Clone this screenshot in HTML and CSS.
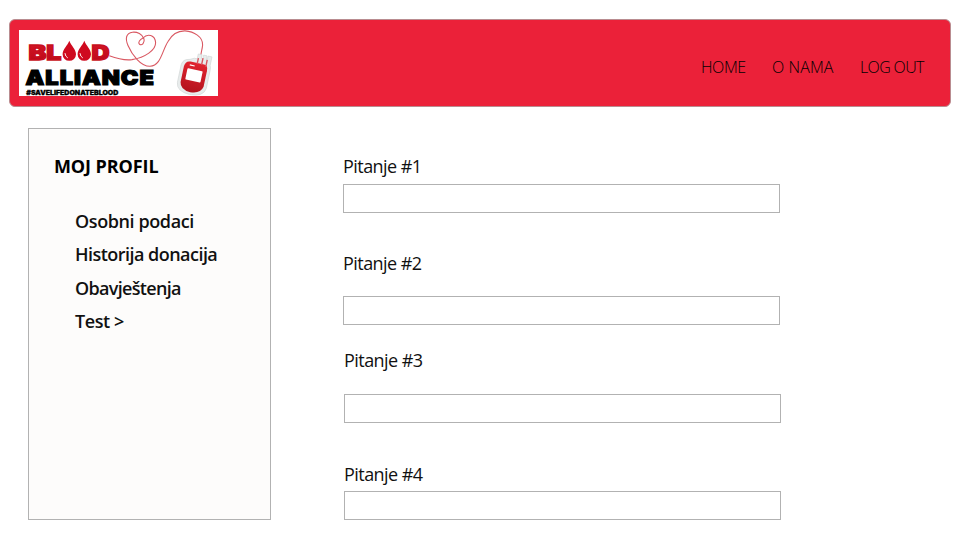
FILE: index.html
```html
<!DOCTYPE html>
<html lang="bs">
<head>
<meta charset="utf-8">
<title>Blood Alliance</title>
<link rel="stylesheet" href="styles.css">
</head>
<body>
<header class="topbar">
  <svg class="logo" viewBox="0 0 199 66" role="img" aria-label="Blood Alliance">
    <defs>
      <linearGradient id="red" x1="0" y1="0" x2="0" y2="1"><stop offset="0" stop-color="#d91828"/><stop offset="1" stop-color="#b80716"/></linearGradient>
      <linearGradient id="bag" x1="0" y1="0" x2="0" y2="1"><stop offset="0" stop-color="#e1242f"/><stop offset="1" stop-color="#b3121d"/></linearGradient>
    </defs>
    <rect width="199" height="66" fill="#fff"/>
    <g class="logo-red">
      <text x="9.500" y="29.5" textLength="33" lengthAdjust="spacingAndGlyphs">BL</text>
      <text x="72.500" y="29.5" textLength="18" lengthAdjust="spacingAndGlyphs">D</text>
    </g>
    <g fill="#cf0a1f">
      <path d="M50.300 10.800C52 15.500 57 19.500 57 24.300A6.700 6.500 0 0 1 43.600 24.300C43.600 19.500 48.600 15.500 50.300 10.800Z"/>
      <path d="M65.300 10.800C67 15.500 72 19.500 72 24.300A6.700 6.500 0 0 1 58.600 24.300C58.600 19.500 63.600 15.500 65.300 10.800Z"/>
    </g>
    <path d="M46 23.500q.2 3 2.500 4.300M61 23.500q.2 3 2.500 4.300" fill="none" stroke="#fff" stroke-width=".9" stroke-linecap="round"/>
    <text class="logo-black" x="6.500" y="54.700" textLength="129.500" lengthAdjust="spacingAndGlyphs">ALLIANCE</text>
    <text class="logo-tag" x="7.300" y="64.500" textLength="92" lengthAdjust="spacingAndGlyphs">#SAVELIFEDONATEBLOOD</text>
    <path d="M90.300 25.700C99 29 106 30.500 113 29.600C126 27.500 137 20 136.600 12.500C136 5 128.500 3 124 8C121 9.500 118.500 12.500 120.500 14.300C123 16 126 12.500 125 9C123.500 4 118 1.700 113.500 2.200C107 3 106 8.500 109 15.500C113 25 122 36.500 131 36.300C142 35.500 142.500 22 149 11.500C154 2.500 161 .8 166 .9C175 1.500 184 7 183.600 15C183.300 20 181.500 22.500 181.500 29" fill="none" stroke="#d95862" stroke-width="1.100"/>
    <g transform="translate(174.700 45.500) rotate(12)">
      <path d="M-7-15L-3-17H0V-22H4V-18H5.500V-22H9V-18H10V-22H14V-13Q15-12 15-8V10Q14 19 0 19.500Q-14 19-14.500 10V-8Q-14-14-7-15Z" fill="#e8ecec" stroke="#d0d5d6" stroke-width=".6"/>
      <path d="M-6-13Q-11-13-11.500-7V9Q-10.500 16.500 0 17Q10.500 16.500 12 9V-7Q12-13 8-13Z" fill="url(#bag)"/>
      <path d="M1-12V-18M5.500-12V-19M10-11V-18" stroke="#d9545d" stroke-width="1.400"/>
      <rect x="-7.500" y="-6" width="15.500" height="11.500" rx=".8" fill="#fff"/>
      <path d="M-6-9.500h5" stroke="#fff" stroke-width="1.200"/>
    </g>
  </svg>
  <nav class="nav">
    <a class="nav-home">HOME</a>
    <a class="nav-about">O NAMA</a>
    <a class="nav-logout">LOG OUT</a>
  </nav>
</header>
<div class="content">
  <aside class="sidebar">
    <h1>MOJ PROFIL</h1>
    <ul>
      <li>Osobni podaci</li>
      <li class="medium">Historija donacija</li>
      <li class="tight">Obavještenja</li>
      <li>Test &gt;</li>
    </ul>
  </aside>
  <form class="questions">
    <div class="question q1"><label for="q1">Pitanje #1</label><input id="q1" type="text"></div>
    <div class="question q2"><label for="q2">Pitanje #2</label><input id="q2" type="text"></div>
    <div class="question q3"><label for="q3">Pitanje #3</label><input id="q3" type="text"></div>
    <div class="question q4"><label for="q4">Pitanje #4</label><input id="q4" type="text"></div>
  </form>
</div>
</body>
</html>
```
FILE: styles.css
```css
* { box-sizing: border-box; }
body {
  margin: 0;
  padding: 19px 9px 0;
  height: 540px;
  overflow: hidden;
  background: #fff;
  color: #111;
  font-family: "Open Sans", "Noto Sans", sans-serif;
}
.topbar {
  display: flex;
  justify-content: space-between;
  height: 88px;
  padding: 10px 26px 0 9px;
  background: #eb2139;
  border: 1px solid #b98c90;
  border-radius: 6px;
}
.logo { display: block; width: 199px; height: 66px; }
.logo text { font-family: Inter, sans-serif; font-weight: 900; }
.logo-red { fill: url(#red); stroke: #c80f20; stroke-width: 1.3; font-size: 20.5px; }
.logo-black { fill: #000; stroke: #000; stroke-width: 1.2; font-size: 20.5px; letter-spacing: .9px; }
.logo-tag { fill: #000; stroke: #000; stroke-width: .3; font-size: 6px; }
.nav {
  display: flex;
  gap: 26px;
  padding-top: 25px;
  font-size: 16px;
  font-weight: 300;
  line-height: 24px;
  color: #000;
  white-space: nowrap;
}
.nav-home { width: 45px; letter-spacing: -.4px; }
.nav-about { width: 62px; letter-spacing: .1px; }
.nav-logout { width: 64px; letter-spacing: -.65px; }
.content { display: flex; padding: 21px 0 0 19px; }
.sidebar {
  width: 243px;
  height: 392px;
  padding: 25px 0 0 25px;
  background: #fdfcfb;
  border: 1px solid #b2b2b2;
}
.sidebar h1 {
  margin: 0;
  font-size: 18px;
  line-height: 24px;
  font-weight: 700;
  letter-spacing: -.1px;
  color: #000;
}
.sidebar ul { list-style: none; margin: 27px 0 0; padding: 0 0 0 21px; }
.sidebar li { font-size: 18px; font-weight: 600; line-height: 33.4px; letter-spacing: -.4px; }
.sidebar .medium { letter-spacing: -.53px; }
.sidebar .tight { letter-spacing: -.68px; }
.questions { width: 438px; margin: 26px 0 0 72px; }
.question { display: flex; flex-direction: column; width: 437px; }
.question label { font-size: 18px; line-height: 24px; letter-spacing: -.55px; }
.question input { width: 437px; height: 29px; padding: 0 8px; border: 1px solid #b2b2b2; background: #fff; font: inherit; }
.q1 { gap: 6px; margin-bottom: 38px; }
.q2 { gap: 21px; margin-bottom: 23px; }
.q3 { gap: 22px; margin: 0 0 39px 1px; }
.q4 { gap: 5px; margin-left: 1px; }
```
